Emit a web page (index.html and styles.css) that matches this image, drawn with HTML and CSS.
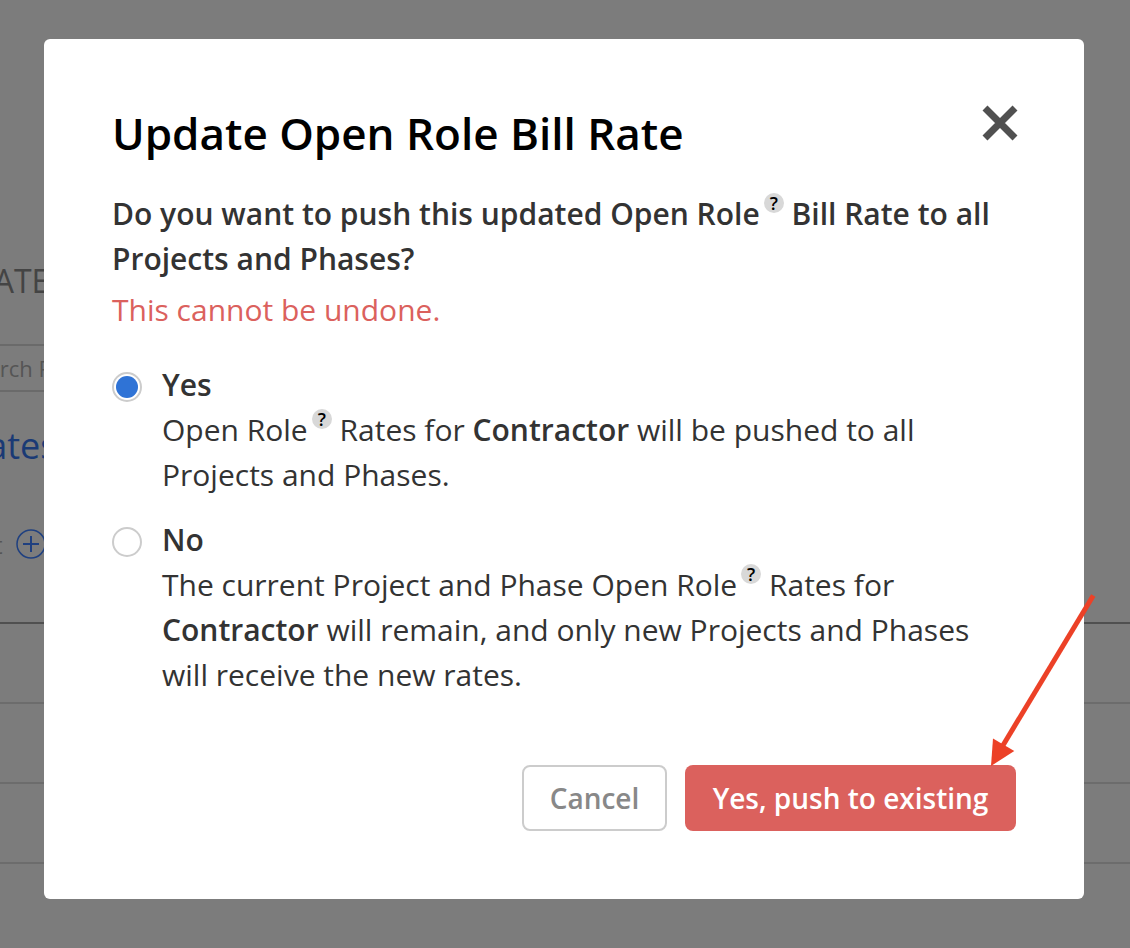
FILE: index.html
```html
<!DOCTYPE html>
<html lang="en">
<head>
    <meta charset="UTF-8">
    <meta name="viewport" content="width=device-width, initial-scale=1.0">
    <title>Update Open Role Bill Rate</title>
    <link rel="stylesheet" href="styles.css">
</head>
<body>

    <!-- Page behind the dialog -->
    <div class="page">
        <div class="page-title">RATES</div>
        <div class="search-box">Search Rates</div>
        <div class="page-link">Rates</div>
        <div class="add-row">
            <span>t</span>
            <svg class="add-icon" viewBox="0 0 30 30">
                <circle cx="15" cy="15" r="14"/>
                <path d="M15 7v16M7 15h16"/>
            </svg>
        </div>
        <div class="table-head"></div>
        <div class="table-row"></div>
        <div class="table-row"></div>
        <div class="table-row"></div>
    </div>

    <!-- Dialog -->
    <div class="overlay">
        <div class="modal">
            <div class="modal-header">
                <h1>Update Open Role Bill Rate</h1>
                <button class="close-button" aria-label="Close">
                    <svg viewBox="0 0 36 36"><path d="M3 3L33 33M33 3L3 33"/></svg>
                </button>
            </div>

            <p class="question">Do you want to push this updated Open Role<span class="help">?</span> Bill Rate to all Projects and Phases?</p>
            <p class="warning">This cannot be undone.</p>

            <label class="option">
                <input type="radio" name="push" checked>
                <span class="option-text">
                    <strong>Yes</strong><br>
                    Open Role<span class="help">?</span> Rates for <strong>Contractor</strong> will be pushed to all Projects and Phases.
                </span>
            </label>

            <label class="option">
                <input type="radio" name="push">
                <span class="option-text">
                    <strong>No</strong><br>
                    The current Project and Phase Open Role<span class="help">?</span> Rates for <strong>Contractor</strong> will remain, and only new Projects and Phases will receive the new rates.
                </span>
            </label>

            <div class="button-group">
                <button class="cancel-button">Cancel</button>
                <button class="push-button">Yes, push to existing</button>
            </div>
        </div>
    </div>

    <!-- Arrow pointing at the push button -->
    <svg class="arrow" viewBox="0 0 110 180">
        <path class="arrow-line" d="M103.3 4.5L12 156"/>
        <path class="arrow-head" d="M1 175L3 147.5L24.3 160Z"/>
    </svg>

</body>
</html>
```

FILE: styles.css
```css
* {
    box-sizing: border-box;
    margin: 0;
    padding: 0;
}

body {
    font-family: "Open Sans", sans-serif;
    height: 948px;
    background-color: #7c7c7c;
    color: #333333;
    overflow: hidden;
}

/* Page behind the dialog */
.page {
    height: 948px;
    padding-top: 258px;
}

.page-title {
    height: 46px;
    margin-left: -26px;
    font-size: 32px;
    line-height: 46px;
    color: #444444;
}

.search-box {
    width: 300px;
    height: 48px;
    margin-top: 40px;
    margin-left: -46px;
    padding-left: 7px;
    border: 2px solid #6a6a6a;
    font-size: 22px;
    line-height: 44px;
    color: #555555;
}

.page-link {
    height: 54px;
    margin-top: 27px;
    margin-left: -35px;
    font-size: 36px;
    line-height: 54px;
    color: #1a3a75;
}

.add-row {
    display: flex;
    align-items: center;
    gap: 13px;
    height: 40px;
    margin-top: 51px;
    margin-left: -6px;
    font-size: 24px;
    color: #555555;
}

.add-icon {
    width: 30px;
    height: 30px;
    fill: none;
    stroke: #1f4080;
    stroke-width: 1.5;
}

.add-icon path {
    stroke-width: 2;
}

.table-head {
    height: 60px;
    border-bottom: 2px solid #505050;
}

.table-row {
    height: 80px;
    border-bottom: 2px solid #6c6c6c;
}

/* Dialog */
.overlay {
    position: absolute;
    inset: 0;
    padding: 39px 46px 0 44px;
}

.modal {
    height: 860px;
    padding: 64px 68px 68px;
    background-color: #ffffff;
    border-radius: 6px;
    font-size: 30px;
    line-height: 45px;
}

.modal-header {
    display: flex;
    justify-content: space-between;
    align-items: flex-start;
}

h1 {
    font-size: 44px;
    font-weight: 600;
    line-height: 60px;
    color: #000000;
}

.close-button {
    width: 36px;
    height: 36px;
    margin-top: 2px;
    margin-right: -2px;
    border: none;
    background: none;
    cursor: pointer;
}

.close-button svg {
    display: block;
    fill: none;
    stroke: #505050;
    stroke-width: 7;
}

.question {
    margin-top: 28px;
    font-weight: 600;
}

.warning {
    margin-top: 6px;
    color: #db615d;
}

.help {
    display: inline-block;
    width: 20px;
    height: 20px;
    margin-left: 4px;
    border-radius: 50%;
    background-color: #d8d8d8;
    font-size: 18px;
    font-weight: 600;
    line-height: 20px;
    text-align: center;
    vertical-align: 15px;
    color: #000000;
}

.option {
    display: flex;
    margin-top: 20px;
}

.warning + .option {
    margin-top: 30px;
}

.option input {
    appearance: none;
    flex: none;
    width: 30px;
    height: 30px;
    margin-top: 10px;
    margin-right: 20px;
    border: 2px solid #cccccc;
    border-radius: 50%;
}

.option input:checked {
    padding: 2px;
    background-color: #2f73d6;
    background-clip: content-box;
}

strong {
    font-weight: 600;
}

.button-group {
    display: flex;
    justify-content: flex-end;
    gap: 18px;
    margin-top: 68px;
}

.button-group button {
    height: 66px;
    border-radius: 8px;
    font-family: inherit;
    font-size: 28px;
    font-weight: 600;
    cursor: pointer;
}

.cancel-button {
    width: 145px;
    border: 2px solid #cccccc;
    background-color: #ffffff;
    color: #888888;
}

.push-button {
    width: 331px;
    border: none;
    background-color: #db615d;
    color: #ffffff;
}

.arrow {
    position: absolute;
    top: 591px;
    left: 990px;
    width: 110px;
    height: 180px;
}

.arrow-line {
    fill: none;
    stroke: #ec4127;
    stroke-width: 5;
}

.arrow-head {
    fill: #ec4127;
}
```
